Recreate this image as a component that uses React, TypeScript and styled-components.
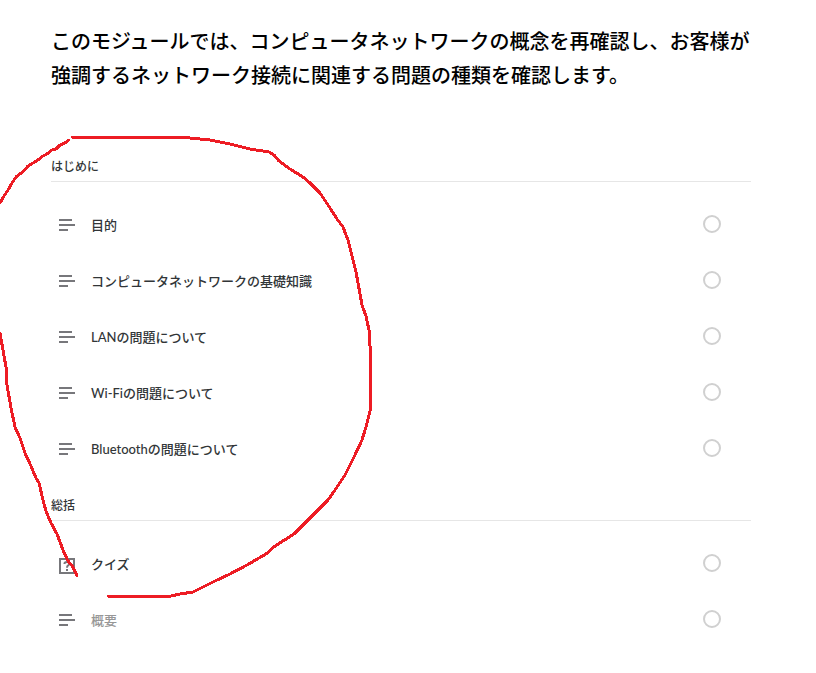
import React from "react";
import styled, { createGlobalStyle } from "styled-components";

const GlobalStyle = createGlobalStyle`
  *, *::before, *::after {
    box-sizing: border-box;
  }
  body {
    margin: 0;
    background: #ffffff;
    font-family: Lato, "Noto Sans CJK JP", sans-serif;
  }
`;

const Page = styled.main`
  position: relative;
  padding: 24px 65px 24px 51px;
  overflow: hidden;
`;

const Intro = styled.p`
  margin: 0 0 65px;
  font-size: 20px;
  font-weight: 500;
  line-height: 34px;
  color: #000000;
`;

const Section = styled.section`
  & + & {
    margin-top: 20px;
  }
`;

const SectionTitle = styled.h2`
  margin: 0 0 14px;
  padding-bottom: 4px;
  border-bottom: 1px solid #e6e6e6;
  font-size: 12px;
  font-weight: 500;
  line-height: 20px;
  color: #313537;
`;

const LessonList = styled.ul`
  margin: 0;
  padding: 0;
  list-style: none;
`;

const LessonLink = styled.a<{ $muted?: boolean }>`
  display: flex;
  align-items: center;
  gap: 16px;
  height: 56px;
  padding: 0 30px 0 8px;
  font-size: 13px;
  font-weight: 500;
  line-height: 20px;
  text-decoration: none;
  color: ${({ $muted }) => ($muted ? "#979797" : "#313537")};
`;

const LessonName = styled.span`
  flex: 1;
  padding-top: 1px;
`;

const LessonIcon = styled.svg`
  flex: none;
  width: 16px;
  height: 22px;
`;

const ProgressRing = styled.span`
  flex: none;
  width: 18px;
  height: 18px;
  border: 2px solid #d0d0d0;
  border-radius: 50%;
`;

const Annotation = styled.svg`
  position: absolute;
  top: 0;
  left: 0;
  width: 816px;
  height: 673px;
  pointer-events: none;
`;

type Kind = "text" | "quiz";

interface Lesson {
  name: string;
  kind: Kind;
  muted?: boolean;
}

const sections: { title: string; lessons: Lesson[] }[] = [
  {
    title: "はじめに",
    lessons: [
      { name: "目的", kind: "text" },
      { name: "コンピュータネットワークの基礎知識", kind: "text" },
      { name: "LANの問題について", kind: "text" },
      { name: "Wi-Fiの問題について", kind: "text" },
      { name: "Bluetoothの問題について", kind: "text" },
    ],
  },
  {
    title: "総括",
    lessons: [
      { name: "クイズ", kind: "quiz" },
      { name: "概要", kind: "text", muted: true },
    ],
  },
];

function KindIcon({ kind }: { kind: Kind }) {
  if (kind === "quiz") {
    return (
      <LessonIcon viewBox="0 0 16 22" fill="none" stroke="#77777b" strokeWidth="2" aria-hidden="true">
        <rect x="1" y="7" width="14" height="14" />
        <path d="M5.5 12V11.5Q5.5 10 8 10Q10.500 10 10.500 11.600Q10.500 12.700 9.200 13.400Q8 14.100 8 15.700" />
        <path d="M8 17V19" />
      </LessonIcon>
    );
  }
  return (
    <LessonIcon viewBox="0 0 16 22" fill="#77777b" aria-hidden="true">
      <rect x="0" y="6" width="13" height="2" />
      <rect x="0" y="11" width="16" height="2" />
      <rect x="0" y="16" width="9" height="2" />
    </LessonIcon>
  );
}

const strokes = [
  "69,140 65,143 60,145 56,149 52,150 47,154 43,156 38,160 33,163 28,166 24,171 20,174 16,177 12,183 8,190 4,196 0,203",
  "72,137 173,137 190,138 210,140 230,144 250,149 269,152 274,155 279,161 290,169 303,177 310,183 320,193 330,208 337,219 343,227 348,240 352,256 356,272 360,294 362,305 366,316 369,330 370,346 370,411 366,427 362,440 354,457 345,475 335,490 328,500 310,518 294,534 275,546 266,554 247,565 228,575 215,581 193,592 180,594 171,596 108,596",
  "0,333 3,350 6,367 7,385 11,408 15,427 20,438 25,453 31,466 36,478 39,483 43,500 46,511 51,523 57,534 63,550 68,561 73,567 77,576",
];

export default function App() {
  return (
    <>
      <GlobalStyle />
      <Page>
        <Intro>
          このモジュールでは、コンピュータネットワークの概念を再確認し、お客様が強調するネットワーク接続に関連する問題の種類を確認します。
        </Intro>
        {sections.map((section) => (
          <Section key={section.title}>
            <SectionTitle>{section.title}</SectionTitle>
            <LessonList>
              {section.lessons.map((lesson) => (
                <li key={lesson.name}>
                  <LessonLink href="#" $muted={lesson.muted}>
                    <KindIcon kind={lesson.kind} />
                    <LessonName>{lesson.name}</LessonName>
                    <ProgressRing />
                  </LessonLink>
                </li>
              ))}
            </LessonList>
          </Section>
        ))}
        <Annotation viewBox="0 0 816 673" fill="none" stroke="#ed1c24" strokeWidth="3" strokeLinejoin="round" strokeLinecap="round" shapeRendering="crispEdges" aria-hidden="true">
          {strokes.map((points) => (
            <polyline key={points} points={points} />
          ))}
        </Annotation>
      </Page>
    </>
  );
}
